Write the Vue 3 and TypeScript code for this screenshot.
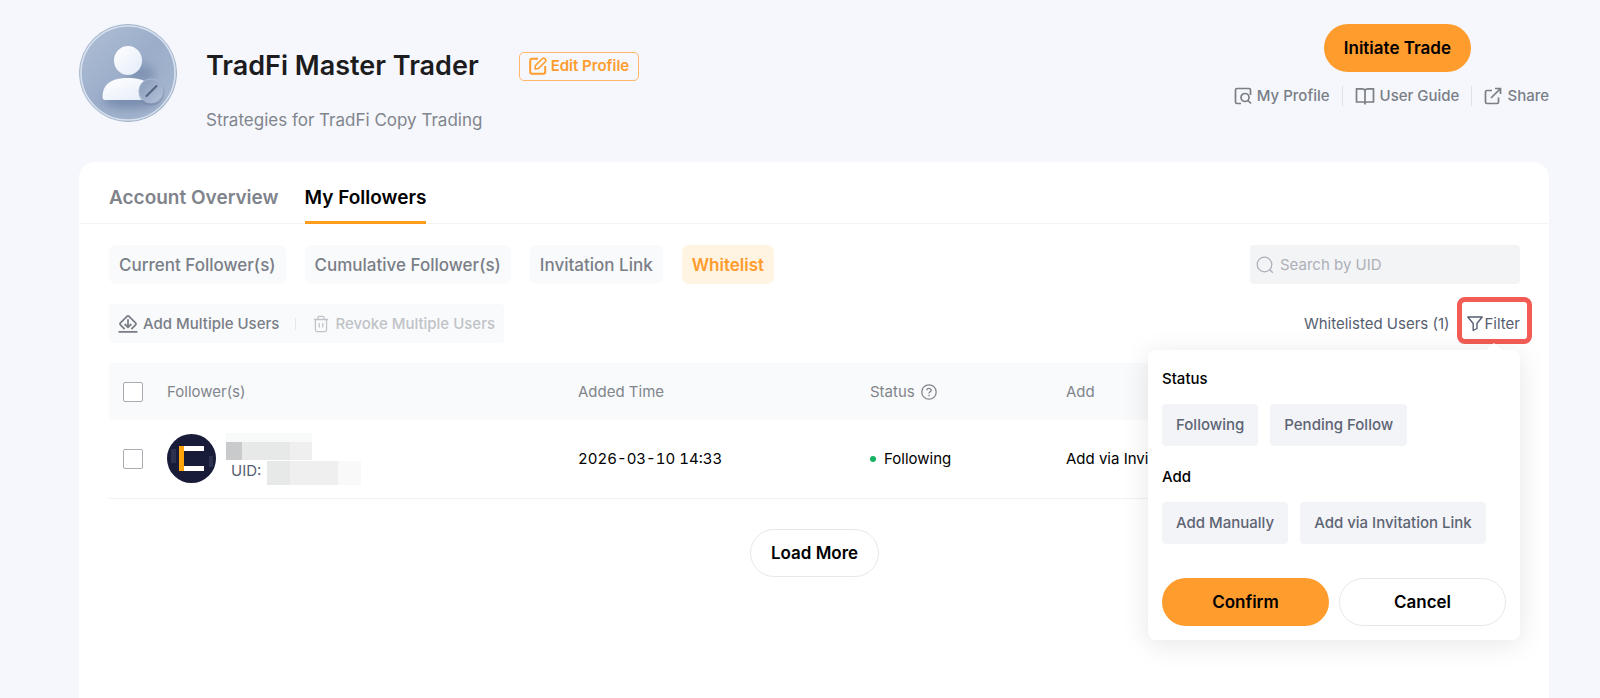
<script setup lang="ts">
import { ref } from 'vue'

interface FilterGroup {
  title: string
  options: string[]
}

const tabs: string[] = ['Account Overview', 'My Followers']
const activeTab = ref('My Followers')

const views: string[] = ['Current Follower(s)', 'Cumulative Follower(s)', 'Invitation Link', 'Whitelist']
const activeView = ref('Whitelist')

const filterGroups: FilterGroup[] = [
  { title: 'Status', options: ['Following', 'Pending Follow'] },
  { title: 'Add', options: ['Add Manually', 'Add via Invitation Link'] },
]

const query = ref('')
const filterOpen = ref(true)
</script>

<template>
  <div class="page">
    <header class="profile">
      <svg class="portrait" viewBox="0 0 98 98" aria-hidden="true">
        <defs>
          <linearGradient id="face" x1="0" y1="0" x2="1" y2="1">
            <stop offset="0" stop-color="#b0bfd6" />
            <stop offset="0.5" stop-color="#9badc9" />
            <stop offset="1" stop-color="#a9b9d1" />
          </linearGradient>
          <linearGradient id="rim" x1="0" y1="0" x2="1" y2="1">
            <stop offset="0" stop-color="#9fafc6" />
            <stop offset="0.5" stop-color="#b4c1d5" />
            <stop offset="1" stop-color="#93a4bf" />
          </linearGradient>
          <linearGradient id="body" x1="0" y1="0" x2="1" y2="1">
            <stop offset="0" stop-color="#ffffff" />
            <stop offset="1" stop-color="#e4ecf9" />
          </linearGradient>
          <linearGradient id="badge" x1="0" y1="0" x2="1" y2="1">
            <stop offset="0" stop-color="#8799b8" />
            <stop offset="1" stop-color="#b4c3da" />
          </linearGradient>
          <filter id="soft" x="-60%" y="-60%" width="220%" height="220%">
            <feGaussianBlur stdDeviation="5" />
          </filter>
        </defs>
        <circle cx="49" cy="49" r="48.500" fill="url(#face)" stroke="url(#rim)" />
        <circle cx="49" cy="49" r="47" fill="none" stroke="#d8e1ee" stroke-width="1.600" />
        <ellipse cx="52" cy="76" rx="28" ry="9" fill="#6d82a6" opacity="0.75" filter="url(#soft)" />
        <ellipse cx="62" cy="50" rx="14" ry="10" fill="#6d82a6" opacity="0.6" filter="url(#soft)" />
        <ellipse cx="49" cy="36.500" rx="14" ry="14.500" fill="url(#body)" />
        <path d="M23.500 73C23.500 59 34 54 49 54S75 59 75 73Q75 76 72 76H26Q23.500 76 23.500 73Z" fill="url(#body)" />
        <circle cx="72.500" cy="68.500" r="13" fill="#6b7fa1" opacity="0.35" />
        <circle cx="72" cy="67" r="12" fill="url(#badge)" stroke="#a9b8d0" stroke-width="1" />
        <path d="M67.500 72 77.500 62" stroke="#51627f" stroke-width="2" stroke-linecap="round" />
      </svg>

      <div class="identity">
        <div class="name-row">
          <h1>TradFi Master Trader</h1>
          <button type="button" class="edit">
            <svg class="icon-md" viewBox="0 0 18 18" fill="none" stroke="currentColor" stroke-width="2" stroke-linejoin="round">
              <path d="M9 1.800H3Q1.200 1.800 1.200 3.600V15Q1.200 16.800 3 16.800H14.400Q16.200 16.800 16.200 15V9" />
              <path d="M6 12 6.500 8.500 13.500 1.500Q14.500 .7 15.600 1.500L16.500 2.400Q17.300 3.500 16.500 4.500L9.500 11.500Z" stroke-width="1.600" />
            </svg>
            Edit Profile
          </button>
        </div>
        <p>Strategies for TradFi Copy Trading</p>
      </div>

      <div class="actions">
        <button type="button" class="pill primary initiate">Initiate Trade</button>
        <nav class="links">
          <a href="#profile">
            <svg class="icon-md" viewBox="0 0 18 18" fill="none" stroke="currentColor" stroke-width="1.700">
              <path d="M7 16.500H3Q1.500 16.500 1.500 15V3Q1.500 1.500 3 1.500H15Q16.500 1.500 16.500 3V8" />
              <circle cx="11" cy="10.500" r="4" />
              <path d="M14 13.500 17 16.500" />
            </svg>
            My Profile
          </a>
          <a href="#guide">
            <svg class="icon-lg" viewBox="0 0 20 18" fill="none" stroke="currentColor" stroke-width="1.700" stroke-linejoin="round">
              <path d="M10 3.500Q9.300 1.800 7 1.800H1.500V15H8Q9.500 15 10 16.300Q10.500 15 12 15H18.500V1.800H13Q10.700 1.800 10 3.500V17.500" />
            </svg>
            User Guide
          </a>
          <a href="#share">
            <svg class="icon-md" viewBox="0 0 18 18" fill="none" stroke="currentColor" stroke-width="1.700">
              <path d="M8 3.500H3Q1.500 3.500 1.500 5V15Q1.500 16.500 3 16.500H13Q14.500 16.500 14.500 15V10.500" />
              <path d="M11 1.500H16.500V7M16.500 1.500 7 11" />
            </svg>
            Share
          </a>
        </nav>
      </div>
    </header>

    <main class="card">
      <nav class="tabs">
        <button
          v-for="tab in tabs"
          :key="tab"
          type="button"
          :class="{ active: tab === activeTab }"
          @click="activeTab = tab"
        >{{ tab }}</button>
      </nav>

      <div class="content">
        <div class="bar">
          <div class="views">
            <button
              v-for="view in views"
              :key="view"
              type="button"
              :class="{ active: view === activeView }"
              @click="activeView = view"
            >{{ view }}</button>
          </div>
          <label class="search">
            <svg class="icon-md" viewBox="0 0 18 18" fill="none" stroke="currentColor" stroke-width="1.300">
              <circle cx="8.500" cy="8.500" r="7.300" />
              <path d="M13.500 13.500 16.800 16.800" />
            </svg>
            <input v-model="query" type="text" placeholder="Search by UID" aria-label="Search by UID" />
          </label>
        </div>

        <div class="bar">
          <div class="bulk">
            <button type="button">
              <svg class="icon-lg" viewBox="0 1 20 19" fill="none" stroke="currentColor" stroke-width="1.900" stroke-linejoin="round">
                <path d="M6.500 16 2 11.300Q1.200 10.300 2 9.400L9 2.400Q10 1.600 11 2.400L18 9.400Q18.800 10.300 18 11.300L13.500 16" />
                <path d="M10 5.500V14M6.500 10.500 10 14 13.500 10.500" />
                <path d="M0 18.800H20" />
              </svg>
              Add Multiple Users
            </button>
            <span class="split"></span>
            <button type="button" disabled>
              <svg class="icon-md" viewBox="0 0 18 20" fill="none" stroke="currentColor" stroke-width="1.400">
                <path d="M1 5H17M5.500 5V3Q5.500 1.500 7 1.500H11Q12.500 1.500 12.500 3V5M2.800 5V16.500Q2.800 18.500 4.800 18.500H13.200Q15.200 18.500 15.200 16.500V5M7 9V14M11 9V14" />
              </svg>
              Revoke Multiple Users
            </button>
          </div>

          <div class="summary">
            <span>Whitelisted Users (1)</span>
            <div class="filter">
              <button type="button" class="filter-toggle" :aria-expanded="filterOpen" @click="filterOpen = !filterOpen">
                <svg class="icon-sm" viewBox="0 0 16 16" fill="none" stroke="currentColor" stroke-width="1.400" stroke-linejoin="round">
                  <path d="M.8 1H15.200L10 7.500V12.500L6.200 14.500V7.500Z" />
                </svg>
                Filter
              </button>
              <form v-if="filterOpen" class="popover" @submit.prevent="filterOpen = false">
                <section v-for="group in filterGroups" :key="group.title">
                  <h2>{{ group.title }}</h2>
                  <div class="options">
                    <button v-for="option in group.options" :key="option" type="button">{{ option }}</button>
                  </div>
                </section>
                <div class="confirm">
                  <button type="submit" class="pill primary">Confirm</button>
                  <button type="button" class="pill outline" @click="filterOpen = false">Cancel</button>
                </div>
              </form>
            </div>
          </div>
        </div>

        <table>
          <colgroup>
            <col class="c-check" />
            <col class="c-follower" />
            <col class="c-time" />
            <col class="c-status" />
            <col />
          </colgroup>
          <thead>
            <tr>
              <th class="check"><input type="checkbox" aria-label="Select all followers" /></th>
              <th>Follower(s)</th>
              <th>Added Time</th>
              <th>
                <span class="status-head">
                  Status
                  <svg class="icon-sm" viewBox="0 0 16 16" fill="none" stroke="currentColor" stroke-width="1.300">
                    <circle cx="8" cy="8" r="7.200" />
                    <path d="M5.800 6.300Q6 4.300 8 4.300T10.200 6.300Q10.200 7.300 9 7.900Q8 8.400 8 9.500M8 10.800V12.200" />
                  </svg>
                </span>
              </th>
              <th>Add</th>
            </tr>
          </thead>
          <tbody>
            <tr>
              <td class="check"><input type="checkbox" aria-label="Select follower" /></td>
              <td>
                <div class="follower">
                  <svg class="logo" viewBox="0 0 49 49" aria-hidden="true">
                    <circle cx="24.500" cy="24.500" r="24.500" fill="#181c38" />
                    <path d="M4 15H9V29H4ZM42 22H46V33H42Z" fill="#2c314d" />
                    <path d="M17 12H37V17H17ZM17 32H37V37H17Z" fill="#fff" />
                    <path d="M12 12H17V37H12Z" fill="#ffa40b" />
                  </svg>
                  <div class="who">
                    <div class="mask name"><i></i><i></i><i></i></div>
                    <div class="uid">UID: <span class="mask code"><i></i><i></i><i></i></span></div>
                  </div>
                </div>
              </td>
              <td class="time">2026-03-10 14:33</td>
              <td><span class="state">Following</span></td>
              <td>Add via Invitation Link</td>
            </tr>
          </tbody>
        </table>

        <button type="button" class="pill outline more">Load More</button>
      </div>
    </main>
  </div>
</template>

<style>
body {
  background: #f5f7fc;
}
</style>

<style scoped>
.page,
.page * {
  box-sizing: border-box;
}

.page {
  display: flex;
  flex-direction: column;
  gap: 32px;
  min-height: 100vh;
  padding: 24px 51px 0 79px;
  background: #f5f7fc;
  color: #000;
  font: 15px/20px Inter, "Liberation Sans", sans-serif;
}

button,
input {
  font: inherit;
  color: inherit;
}

button {
  margin: 0;
  padding: 0;
  border: 0;
  background: none;
  white-space: nowrap;
  cursor: pointer;
}

svg {
  display: block;
  flex: none;
}

.icon-sm {
  width: 16px;
  height: 16px;
}

.icon-md {
  width: 18px;
  height: 18px;
}

.icon-lg {
  width: 20px;
  height: 18px;
}

.pill {
  height: 48px;
  border-radius: 24px;
  font-size: 17px;
  font-weight: 600;
}

.primary {
  background: #ff9c2e;
}

.outline {
  border: 1px solid #e6e8ee;
  background: #fff;
}

.profile {
  display: flex;
  align-items: flex-start;
  height: 106px;
}

.portrait {
  width: 98px;
  height: 98px;
}

.identity {
  margin-left: 29px;
  padding-top: 24px;
}

.name-row {
  display: flex;
  align-items: center;
  gap: 40px;
}

h1 {
  margin: 0;
  color: #1c1c1e;
  font-size: 27px;
  font-weight: 600;
  line-height: 36px;
}

.edit {
  display: flex;
  align-items: center;
  gap: 4px;
  height: 29px;
  padding: 0 9px;
  border: 1px solid #ffb76a;
  border-radius: 5px;
  color: #ff9c2e;
  font-weight: 600;
}

.identity p {
  margin: 24px 0 0;
  color: #81858c;
  font-size: 17px;
  line-height: 24px;
}

.actions {
  display: flex;
  flex-direction: column;
  align-items: flex-end;
  gap: 14px;
  margin-left: auto;
}

.initiate {
  margin-right: 78px;
  padding: 0 20px;
}

.links {
  display: flex;
}

.links a {
  display: flex;
  align-items: center;
  gap: 5px;
  color: #7a7e87;
  font-weight: 500;
  text-decoration: none;
}

.links a + a {
  margin-left: 12px;
  padding-left: 12px;
  border-left: 1px solid #dfe2e8;
}

.card {
  flex: 1;
  border-radius: 16px 16px 0 0;
  background: #fff;
}

.tabs {
  display: flex;
  gap: 26px;
  height: 62px;
  padding: 0 30px;
  border-bottom: 1px solid #f3f4f7;
}

.tabs button {
  height: 62px;
  padding-top: 12px;
  border-bottom: 3px solid transparent;
  color: #7f838b;
  font-size: 19px;
  font-weight: 600;
}

.tabs .active {
  border-color: #ff9c1c;
  color: #000;
}

.content {
  display: flex;
  flex-direction: column;
  gap: 20px;
  padding: 21px 29px 0 30px;
}

.bar {
  display: flex;
  justify-content: space-between;
  align-items: center;
  height: 39px;
}

.views {
  display: flex;
  gap: 19px;
}

.views button {
  height: 39px;
  padding: 0 10px;
  border-radius: 7px;
  background: #f9fafc;
  color: #7a7e87;
  font-size: 17px;
  font-weight: 500;
}

.views .active {
  background: #fff3e1;
  color: #ff9c2e;
  font-weight: 600;
}

.search {
  display: flex;
  align-items: center;
  gap: 6px;
  width: 270px;
  height: 39px;
  padding: 0 6px;
  border-radius: 4px;
  background: #f3f4f6;
  color: #adb0b8;
}

.search input {
  flex: 1;
  min-width: 0;
  padding: 0;
  border: 0;
  outline: 0;
  background: none;
  color: #1c1c1e;
}

.search input::placeholder {
  color: #adb0b8;
  opacity: 1;
}

.bulk {
  display: flex;
  align-items: center;
  height: 39px;
  padding: 0 9px;
  border-radius: 4px;
  background: #f9fafc;
}

.bulk button {
  display: flex;
  align-items: center;
  gap: 5px;
  color: #7a7e87;
  font-weight: 500;
}

.bulk button:disabled {
  color: #c0c3c7;
}

.split {
  width: 1px;
  height: 12px;
  margin: 0 16px;
  background: #e6e8ec;
}

.summary {
  display: flex;
  align-items: center;
  gap: 7px;
  color: #565e70;
}

.filter {
  position: relative;
  margin: -6px -12px 0 0;
}

.filter-toggle {
  display: flex;
  align-items: center;
  gap: 2px;
  height: 47px;
  padding: 6px 7px 0 5px;
  border: 5px solid #f25c54;
  border-radius: 8px;
  background: #fff;
}

.popover {
  position: absolute;
  z-index: 2;
  top: 53px;
  right: 12px;
  display: flex;
  flex-direction: column;
  gap: 20px;
  width: 372px;
  padding: 18px 14px 14px;
  border-radius: 8px;
  background: #fff;
  box-shadow: 0 4px 28px rgba(0, 0, 0, 0.1);
}

.popover::before {
  content: "";
  position: absolute;
  top: -5px;
  right: 20px;
  width: 12px;
  height: 12px;
  border-radius: 2px;
  background: #fff;
  transform: rotate(45deg);
}

h2 {
  margin: 0;
  color: #000;
  font-size: 15px;
  font-weight: 500;
  line-height: 22px;
}

.options {
  display: flex;
  gap: 12px;
  margin-top: 14px;
}

.options button {
  height: 42px;
  padding: 0 14px;
  border-radius: 4px;
  background: #f3f4f7;
  color: #5d6474;
  font-weight: 500;
}

.confirm {
  display: grid;
  grid-template-columns: 1fr 1fr;
  gap: 10px;
  margin-top: 14px;
  color: #000;
}

table {
  width: 100%;
  border-collapse: collapse;
  table-layout: fixed;
}

.c-check {
  width: 58px;
}

.c-follower {
  width: 411px;
}

.c-time {
  width: 292px;
}

.c-status {
  width: 196px;
}

th,
td {
  padding: 0;
  text-align: left;
  vertical-align: middle;
  white-space: nowrap;
}

th {
  height: 57px;
  background: #f9fafc;
  color: #81858c;
  font-weight: 400;
}

td {
  height: 78px;
  border-bottom: 1px solid #f1f2f4;
}

.time {
  font-variant-numeric: tabular-nums;
}

.check {
  padding-left: 14px;
}

.check input {
  display: block;
  width: 20px;
  height: 20px;
  margin: 0;
  border: 1px solid #a9abb1;
  border-radius: 2px;
  background: #fff;
  appearance: none;
}

.status-head {
  display: flex;
  align-items: center;
  gap: 6px;
}

.state {
  display: flex;
  align-items: center;
  gap: 8px;
}

.state::before {
  content: "";
  width: 6px;
  height: 6px;
  border-radius: 50%;
  background: #16b364;
}

.follower {
  display: flex;
  align-items: center;
  gap: 10px;
}

.logo {
  width: 49px;
  height: 49px;
}

.mask {
  display: inline-grid;
}

.mask i {
  background: #efefef;
}

.name {
  grid-template-columns: 16px 48px 22px;
  width: 86px;
  height: 27px;
  border-top: 9px solid #f8f9f9;
}

.name i:nth-child(1) {
  background: #c9cacc;
}

.name i:nth-child(2),
.code i:nth-child(1) {
  background: #e7e8e8;
}

.who {
  display: flex;
  flex-direction: column;
  gap: 1px;
}

.uid {
  display: flex;
  gap: 6px;
  padding-left: 5px;
  color: #565e70;
}

.code {
  grid-template-columns: 23px 48px 23px;
  height: 24px;
}

.code i:nth-child(3) {
  background: #f9f9f9;
}

.more {
  align-self: center;
  margin-top: 10px;
  padding: 0 20px;
}
</style>
